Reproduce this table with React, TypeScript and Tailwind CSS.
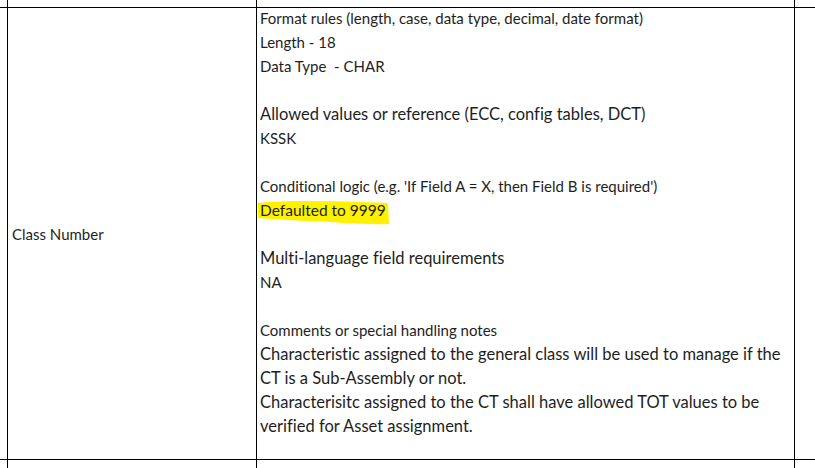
import React from 'react';

const font = { fontFamily: 'Lato, "Liberation Sans", sans-serif', fontVariantLigatures: 'none' as const };

// [text, larger run?] — the sheet mixes 11pt and 12pt runs inside the cell
const lines: [string, boolean][] = [
  ['Format rules (length, case, data type, decimal, date format)', false],
  ['Length - 18', false],
  ['Data Type  - CHAR', false],
  ['', false],
  ['Allowed values or reference (ECC, config tables, DCT)', true],
  ['KSSK', false],
  ['', false],
  ["Conditional logic (e.g. 'If Field A = X, then Field B is required')", false],
  ['__HIGHLIGHT__', false],
  ['', false],
  ['Multi-language field requirements', true],
  ['NA', false],
  ['', false],
  ['Comments or special handling notes', false],
  ['Characteristic assigned to the general class will be used to manage if the', true],
  ['CT is a Sub-Assembly or not.', true],
  ['Characterisitc assigned to the CT shall have allowed TOT values to be', true],
  ['verified for Asset assignment.', true],
];

// freehand marker stroke under the defaulted value
function Highlight() {
  return (
    <svg
      className="absolute left-[-2px] top-[2px] h-[26px] w-[134px]"
      viewBox="0 0 134 26"
    >
      <path
        d="M0 3 C30 0 70 1 130 3 L131 24 C110 25 80 22 50 21 C30 20 12 19 0 18 Z"
        fill="#fff200"
      />
    </svg>
  );
}

export default function App() {
  return (
    <div
      className="grid h-[468px] w-[815px] grid-cols-[7px_248px_537px_1fr] grid-rows-[7px_451px_1fr] gap-px bg-black text-[15px] text-[#1e1e1e]"
      style={font}
    >
      <div className="bg-white" />
      <div className="bg-white" />
      <div className="bg-white" />
      <div className="bg-white" />

      <div className="bg-white" />
      <div className="flex items-center bg-white pl-[4px] pt-[1px]">Class Number</div>
      <div className="bg-white pl-[3px] leading-[24px]">
        <div className="-mt-[2px]">
          {lines.map(([l, big], i) =>
            l === '__HIGHLIGHT__' ? (
              <div key={i} className="relative h-[24px] text-[15.5px]">
                <Highlight />
                <span className="relative">Defaulted to 9999</span>
              </div>
            ) : (
              <div
                key={i}
                className={big ? 'h-[24px] whitespace-pre text-[16.5px]' : 'h-[24px] whitespace-pre'}
              >
                {l}
              </div>
            )
          )}
        </div>
      </div>
      <div className="bg-white" />

      <div className="bg-white" />
      <div className="bg-white" />
      <div className="bg-white" />
      <div className="bg-white" />
    </div>
  );
}
